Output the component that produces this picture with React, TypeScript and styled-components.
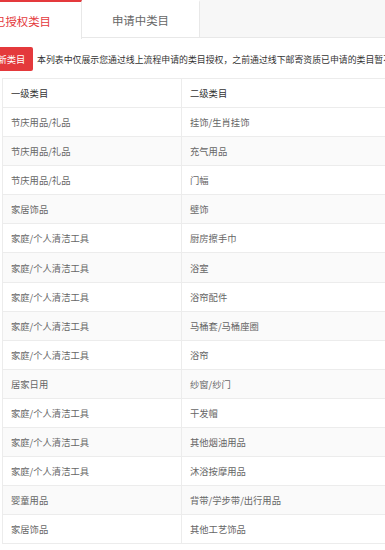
import React from "react";
import styled, { createGlobalStyle } from "styled-components";

const Global = createGlobalStyle`
  html, body {
    margin: 0;
    padding: 0;
    background: #ffffff;
    overflow: hidden;
  }
  body {
    font-family: "Noto Sans CJK SC", "Noto Sans", sans-serif;
  }
`;

const Page = styled.div`
  margin-left: -36px;
  width: 560px;
`;

const TabBar = styled.div`
  display: flex;
  height: 38px;
  background: #f7f7f7;
  border-bottom: 1px solid #e8e8e8;
  box-sizing: border-box;
`;

const Tab = styled.div<{ $active?: boolean }>`
  display: flex;
  align-items: center;
  justify-content: center;
  padding: 0 30px;
  height: ${(p) => (p.$active ? "39px" : "38px")};
  box-sizing: border-box;
  background: #ffffff;
  font-size: 11.4px;
  color: ${(p) => (p.$active ? "#e4393c" : "#666666")};
  border-top: 2px solid ${(p) => (p.$active ? "#e4393c" : "transparent")};
  border-right: 1px solid #e8e8e8;
  border-bottom: ${(p) => (p.$active ? "none" : "1px solid #e8e8e8")};
  white-space: nowrap;
`;

const Content = styled.div`
  padding: 9px 0 0 7px;
`;

const Notice = styled.div`
  display: flex;
  align-items: center;
  gap: 4px;
  height: 24px;
`;

const ApplyButton = styled.button`
  height: 24px;
  padding: 0 7.8px;
  border: none;
  border-radius: 2px;
  background: #e4393c;
  color: #ffffff;
  font-family: inherit;
  font-size: 9.3px;
  white-space: nowrap;
`;

const NoticeText = styled.span`
  font-size: 8.9px;
  color: #333333;
  white-space: nowrap;
`;

const Table = styled.table`
  margin: 7px 0 0 31px;
  border-collapse: collapse;
  table-layout: fixed;
  width: 520px;
  border: 1px solid #ececec;
`;

const HeadCell = styled.th<{ $w?: number }>`
  height: 29px;
  padding: 0 0 0 8px;
  box-sizing: border-box;
  text-align: left;
  font-weight: normal;
  font-size: 9.3px;
  color: #333333;
  border-bottom: 1px solid #ececec;
  border-right: 1px solid #ececec;
  width: ${(p) => (p.$w ? `${p.$w}px` : "auto")};
`;

const Row = styled.tr<{ $striped?: boolean }>`
  background: ${(p) => (p.$striped ? "#fafafa" : "#ffffff")};
`;

const Cell = styled.td`
  height: 29.1px;
  padding: 0 0 0 8px;
  box-sizing: border-box;
  font-size: 9.3px;
  color: #666666;
  border-bottom: 1px solid #ececec;
  border-right: 1px solid #ececec;
  white-space: nowrap;
`;

const rows: [string, string][] = [
  ["节庆用品/礼品", "挂饰/生肖挂饰"],
  ["节庆用品/礼品", "充气用品"],
  ["节庆用品/礼品", "门幅"],
  ["家居饰品", "壁饰"],
  ["家庭/个人清洁工具", "厨房擦手巾"],
  ["家庭/个人清洁工具", "浴室"],
  ["家庭/个人清洁工具", "浴帘配件"],
  ["家庭/个人清洁工具", "马桶套/马桶座圈"],
  ["家庭/个人清洁工具", "浴帘"],
  ["居家日用", "纱窗/纱门"],
  ["家庭/个人清洁工具", "干发帽"],
  ["家庭/个人清洁工具", "其他烟油用品"],
  ["家庭/个人清洁工具", "沐浴按摩用品"],
  ["婴童用品", "背带/学步带/出行用品"],
  ["家居饰品", "其他工艺饰品"],
];

export default function App() {
  return (
    <>
      <Global />
      <Page>
        <TabBar>
          <Tab $active>已授权类目</Tab>
          <Tab>申请中类目</Tab>
        </TabBar>
        <Content>
          <Notice>
            <ApplyButton>申请新类目</ApplyButton>
            <NoticeText>
              本列表中仅展示您通过线上流程申请的类目授权，之前通过线下邮寄资质已申请的类目暂不在此展示
            </NoticeText>
          </Notice>
          <Table>
            <thead>
              <tr>
                <HeadCell $w={179}>一级类目</HeadCell>
                <HeadCell>二级类目</HeadCell>
              </tr>
            </thead>
            <tbody>
              {rows.map(([a, b], i) => (
                <Row key={i} $striped={i % 2 === 1}>
                  <Cell>{a}</Cell>
                  <Cell>{b}</Cell>
                </Row>
              ))}
            </tbody>
          </Table>
        </Content>
      </Page>
    </>
  );
}
